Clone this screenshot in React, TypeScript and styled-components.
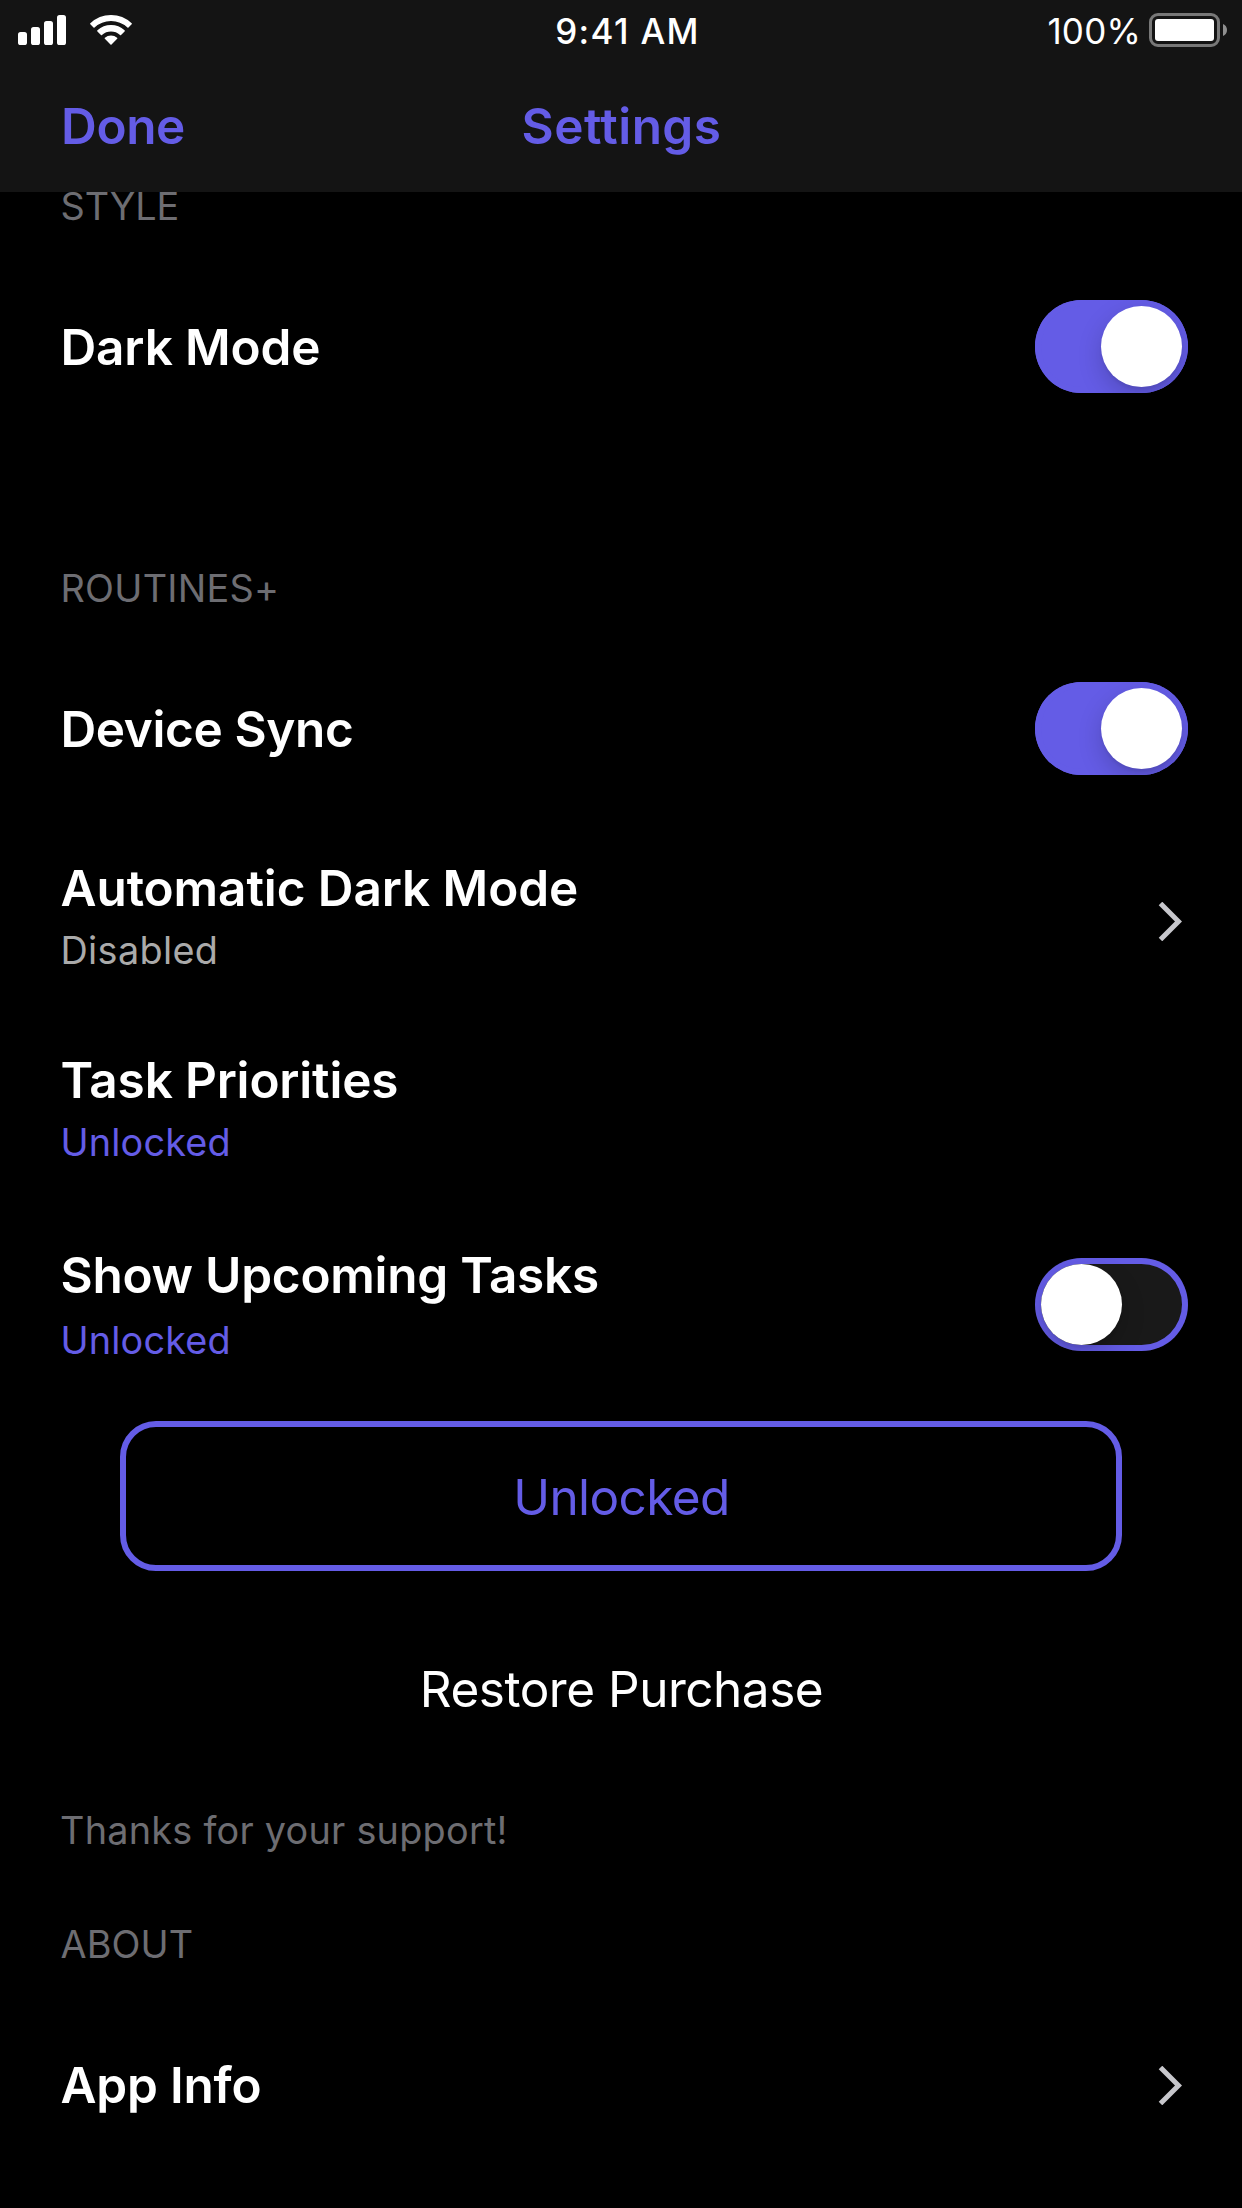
import React, { useState } from "react";
import styled, { createGlobalStyle } from "styled-components";

const color = {
  accent: "#645ce6",
  bar: "#141414",
  background: "#000000",
  text: "#ffffff",
  label: "#6d6d72",
  detail: "#aaaaaa",
  chevron: "#c7c7cc",
  track: "#191919",
};

const GlobalStyle = createGlobalStyle`
  *, *::before, *::after { box-sizing: border-box; }
  html, body { margin: 0; background: ${color.background}; }
  body { font-family: Inter, Roboto, "Liberation Sans", sans-serif; }
  button { font: inherit; color: inherit; background: none; border: 0; padding: 0; margin: 0; }
`;

const Screen = styled.div`
  width: 1242px;
  height: 2208px;
  overflow: hidden;
  display: flex;
  flex-direction: column;
  background: ${color.background};
  color: ${color.text};
`;

const Header = styled.header`
  height: 192px;
  flex: none;
  background: ${color.bar};
`;

const StatusBar = styled.div`
  height: 60px;
  padding: 0 15px 0 18px;
  display: grid;
  grid-template-columns: 1fr auto 1fr;
  align-items: center;
  font-size: 35px;
  line-height: 42px;
`;

const StatusLeft = styled.div`
  display: flex;
  align-items: center;
  gap: 24px;
`;

const Clock = styled.div`
  padding: 2px 0 0 10px;
  font-weight: 500;
  letter-spacing: 1.32px;
`;

const StatusRight = styled.div`
  display: flex;
  justify-content: flex-end;
  align-items: center;
  gap: 8px;
`;

const BatteryLevel = styled.span`
  padding-top: 2px;
  letter-spacing: 0.2px;
`;

const NavBar = styled.nav`
  height: 132px;
  padding: 0 60px 0 61px;
  display: grid;
  grid-template-columns: 1fr auto 1fr;
  align-items: center;
  color: ${color.accent};
  font-size: 49.5px;
  font-weight: 600;
  line-height: 60px;
`;

const NavButton = styled.button`
  justify-self: start;
  letter-spacing: -0.35px;
`;

const NavTitle = styled.h1`
  margin: 0;
  font: inherit;
  letter-spacing: 0.45px;
`;

/* The list is scrolled so that its first label sits against the bar. */
const Content = styled.main`
  margin-top: -9px;
  display: flex;
  flex-direction: column;
`;

const Section = styled.section<{ $gap?: number }>`
  margin-top: ${(p) => p.$gap ?? 0}px;
  display: flex;
  flex-direction: column;
`;

const SectionLabel = styled.h2<{ $spacing: number }>`
  margin: 0 0 21px;
  padding-left: 60.5px;
  color: ${color.label};
  font-size: 37.8px;
  font-weight: 400;
  line-height: 46px;
  letter-spacing: ${(p) => p.$spacing}px;
`;

const SectionNote = styled.p`
  margin: 23px 0 0;
  padding-left: 60px;
  color: ${color.label};
  font-size: 37.8px;
  line-height: 46px;
  letter-spacing: 0.25px;
`;

const Row = styled.div`
  height: 192px;
  padding: 0 54px 0 61px;
  display: flex;
  align-items: center;
  justify-content: space-between;
`;

const RowText = styled.div<{ $gap?: number; $top?: number; $bottom?: number }>`
  padding-top: ${(p) => p.$top ?? 0}px;
  padding-bottom: ${(p) => p.$bottom ?? 0}px;
  display: flex;
  flex-direction: column;
  gap: ${(p) => p.$gap ?? 0}px;
`;

const RowTitle = styled.div<{ $spacing: number }>`
  margin-left: -0.5px;
  font-size: 49.5px;
  font-weight: 600;
  line-height: 60px;
  letter-spacing: ${(p) => p.$spacing}px;
  white-space: nowrap;
`;

const RowDetail = styled.div<{ $accent?: boolean }>`
  margin-left: -0.5px;
  color: ${(p) => (p.$accent ? color.accent : color.detail)};
  font-size: 37.8px;
  line-height: 46px;
  letter-spacing: ${(p) => (p.$accent ? 0.17 : 0.34)}px;
`;

const Track = styled.button<{ $on: boolean }>`
  width: 153px;
  height: 93px;
  margin-top: 1px;
  padding: 6px;
  display: flex;
  justify-content: ${(p) => (p.$on ? "flex-end" : "flex-start")};
  overflow: hidden;
  border-radius: 46.5px;
  background: ${(p) => (p.$on ? color.accent : color.track)};
  box-shadow: inset 0 0 0 6px ${color.accent};
`;

const Knob = styled.span`
  width: 81px;
  height: 81px;
  border-radius: 50%;
  background: #ffffff;
  box-shadow: 0 9px 24px rgba(0, 0, 0, 0.18), 0 3px 3px rgba(0, 0, 0, 0.06);
`;

const ChevronIcon = styled.svg`
  width: 24px;
  height: 39px;
  margin: 3px 6px 0 0;
  flex: none;
`;

const ButtonRow = styled.div`
  height: 192px;
  padding: 21px 120px;
`;

const OutlineButton = styled.button`
  width: 100%;
  height: 150px;
  padding: 2px 0 0 1px;
  display: flex;
  align-items: center;
  justify-content: center;
  border: 6px solid ${color.accent};
  border-radius: 36px;
  color: ${color.accent};
  font-size: 49.5px;
  line-height: 60px;
  letter-spacing: -0.59px;
`;

const PlainButton = styled.button`
  height: 192px;
  padding: 2px 0 0 1px;
  display: flex;
  align-items: center;
  justify-content: center;
  font-size: 49.5px;
  line-height: 60px;
  letter-spacing: -0.48px;
`;

function Signal() {
  return (
    <svg width="48" height="30" viewBox="0 0 48 30" fill="#fff">
      <rect x="0" y="17" width="9" height="13" rx="2.6" />
      <rect x="13" y="12" width="9" height="18" rx="2.6" />
      <rect x="26" y="6" width="9" height="24" rx="2.6" />
      <rect x="39" y="0" width="9" height="30" rx="2.6" />
    </svg>
  );
}

function Wifi() {
  return (
    <svg width="42" height="30" viewBox="-21 -30 42 30" fill="#fff" stroke="#fff" strokeWidth="1.5" strokeLinejoin="round">
      <path d="M-20.14-21.21A29.25 29.25 0 0 1 20.14-21.21L16.96-18.02A24.75 24.75 0 0 0-16.96-18.02Z" />
      <path d="M-13.07-14.13A19.25 19.25 0 0 1 13.07-14.13L9.53-10.59A14.25 14.25 0 0 0-9.53-10.59Z" />
      <path d="M-5.64-6.69A8.75 8.75 0 0 1 5.64-6.69L0-1.06Z" />
    </svg>
  );
}

function Battery() {
  return (
    <svg width="78" height="34" viewBox="0 0 78 34">
      <rect x="1.5" y="1.5" width="68" height="31" rx="7.5" fill="none" stroke="#787878" strokeWidth="3" />
      <rect x="6" y="6" width="59" height="22" rx="3" fill="#fff" />
      <path d="M74 11C76.500 12 78 14.300 78 17S76.500 22 74 23Z" fill="#8f8f8f" />
    </svg>
  );
}

function Chevron() {
  return (
    <ChevronIcon viewBox="0 0 24 39" fill="none" stroke={color.chevron} strokeWidth="5">
      <path d="M2.500 1.500L20.500 19.500L2.500 37.500" />
    </ChevronIcon>
  );
}

function Toggle({ label, initial }: { label: string; initial: boolean }) {
  const [on, setOn] = useState(initial);
  return (
    <Track type="button" role="switch" aria-checked={on} aria-label={label} $on={on} onClick={() => setOn(!on)}>
      <Knob />
    </Track>
  );
}

export default function App() {
  return (
    <>
      <GlobalStyle />
      <Screen>
        <Header>
          <StatusBar>
            <StatusLeft>
              <Signal />
              <Wifi />
            </StatusLeft>
            <Clock>9:41 AM</Clock>
            <StatusRight>
              <BatteryLevel>100%</BatteryLevel>
              <Battery />
            </StatusRight>
          </StatusBar>
          <NavBar>
            <NavButton type="button">Done</NavButton>
            <NavTitle>Settings</NavTitle>
          </NavBar>
        </Header>

        <Content>
          <Section>
            <SectionLabel $spacing={-0.1}>STYLE</SectionLabel>
            <Row>
              <RowText $top={2}>
                <RowTitle $spacing={-0.15}>Dark Mode</RowTitle>
              </RowText>
              <Toggle label="Dark Mode" initial />
            </Row>
          </Section>

          <Section $gap={123}>
            <SectionLabel $spacing={0.28}>ROUTINES+</SectionLabel>
            <Row>
              <RowText $top={2}>
                <RowTitle $spacing={-0.38}>Device Sync</RowTitle>
              </RowText>
              <Toggle label="Device Sync" initial />
            </Row>
            <Row>
              <RowText $gap={9} $bottom={9}>
                <RowTitle $spacing={-0.09}>Automatic Dark Mode</RowTitle>
                <RowDetail>Disabled</RowDetail>
              </RowText>
              <Chevron />
            </Row>
            <Row>
              <RowText $gap={9} $bottom={9}>
                <RowTitle $spacing={-0.18}>Task Priorities</RowTitle>
                <RowDetail $accent>Unlocked</RowDetail>
              </RowText>
            </Row>
            <Row>
              <RowText $gap={12}>
                <RowTitle $spacing={-0.27}>Show Upcoming Tasks</RowTitle>
                <RowDetail $accent>Unlocked</RowDetail>
              </RowText>
              <Toggle label="Show Upcoming Tasks" initial={false} />
            </Row>
            <ButtonRow>
              <OutlineButton type="button">Unlocked</OutlineButton>
            </ButtonRow>
            <PlainButton type="button">Restore Purchase</PlainButton>
            <SectionNote>Thanks for your support!</SectionNote>
          </Section>

          <Section $gap={68}>
            <SectionLabel $spacing={0.1}>ABOUT</SectionLabel>
            <Row>
              <RowText $top={2}>
                <RowTitle $spacing={-0.19}>App Info</RowTitle>
              </RowText>
              <Chevron />
            </Row>
          </Section>
        </Content>
      </Screen>
    </>
  );
}
